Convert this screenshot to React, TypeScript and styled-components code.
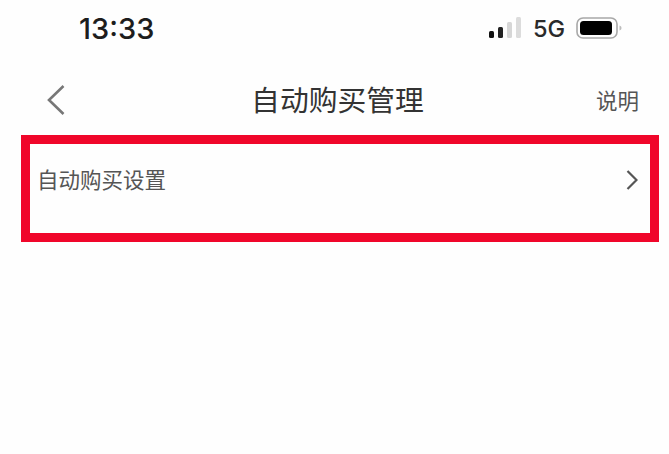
import React from 'react';
import styled, { createGlobalStyle } from 'styled-components';

const GlobalStyle = createGlobalStyle`
  html, body {
    margin: 0;
    padding: 0;
    background: #fefefe;
  }
  * {
    box-sizing: border-box;
  }
`;

const Page = styled.div`
  width: 669px;
  height: 454px;
  overflow: hidden;
  background: #fefefe;
  font-family: "Noto Sans CJK SC", "Liberation Sans", sans-serif;
`;

const StatusBar = styled.div`
  height: 58px;
  padding: 0 47px 2px 79px;
  display: flex;
  align-items: center;
  justify-content: space-between;
`;

const Time = styled.span`
  font-family: Inter, "Liberation Sans", sans-serif;
  font-size: 29px;
  font-weight: 500;
  color: #1d1d1d;
`;

const StatusRight = styled.div`
  display: flex;
  align-items: center;
  gap: 11px;
`;

const Network = styled.span`
  font-family: Inter, "Liberation Sans", sans-serif;
  font-size: 23.5px;
  font-weight: 500;
  color: #2a2a2a;
`;

const NavBar = styled.div`
  height: 77px;
  padding: 6px 30px 0 46px;
  display: grid;
  grid-template-columns: 1fr auto 1fr;
  align-items: center;
`;

const BackButton = styled.button`
  width: 20px;
  height: 32px;
  padding: 0;
  border: none;
  background: none;
  display: flex;
`;

const Title = styled.h1`
  margin: 0 10px 0 0;
  font-size: 28.8px;
  font-weight: 400;
  color: #333;
  line-height: 1;
`;

const NavAction = styled.span`
  justify-self: end;
  font-size: 21.5px;
  color: #555;
`;

const HighlightBox = styled.div`
  margin: 0 10px 0 21px;
  height: 107px;
  border: 9px solid #f0062a;
  padding: 0 12px 20px 7px;
  display: flex;
  align-items: center;
  justify-content: space-between;
`;

const RowLabel = styled.span`
  font-size: 21.5px;
  color: #555;
`;

const ForwardSlot = styled.span`
  display: flex;
  margin-top: 3px;
`;

const SignalIcon = () => (
  <svg width="33" height="22" viewBox="0 0 33 22">
    <rect x="0" y="14" width="5" height="7" rx="1.5" fill="#111" />
    <rect x="9" y="10" width="5" height="11" rx="1.5" fill="#222" />
    <rect x="18" y="5" width="5" height="16" rx="1.5" fill="#d6d6d6" />
    <rect x="27" y="0" width="5" height="21" rx="1.5" fill="#dcdcdc" />
  </svg>
);

const BatteryIcon = () => (
  <svg width="46" height="24" viewBox="0 0 46 24">
    <rect x="1" y="2" width="40" height="20" rx="6" fill="none" stroke="#a8a8a8" strokeWidth="1.6" />
    <rect x="4" y="5" width="32" height="14" rx="3.5" fill="#000" />
    <path d="M43.5 9.5c1.5.5 2 1.5 2 2.5s-.5 2-2 2.5z" fill="#bdbdbd" />
  </svg>
);

const BackIcon = () => (
  <svg width="20" height="32" viewBox="0 0 20 32">
    <path d="M17.5 2 3 16l14.5 14" fill="none" stroke="#777" strokeWidth="2.6" />
  </svg>
);

const ForwardIcon = () => (
  <svg width="12" height="20" viewBox="0 0 12 20">
    <path d="M1.5 1 10.5 10l-9 9" fill="none" stroke="#555" strokeWidth="2.2" />
  </svg>
);

const App: React.FC = () => {
  return (
    <Page>
      <GlobalStyle />
      <StatusBar>
        <Time>13:33</Time>
        <StatusRight>
          <SignalIcon />
          <Network>5G</Network>
          <BatteryIcon />
        </StatusRight>
      </StatusBar>
      <NavBar>
        <BackButton><BackIcon /></BackButton>
        <Title>自动购买管理</Title>
        <NavAction>说明</NavAction>
      </NavBar>
      <HighlightBox>
        <RowLabel>自动购买设置</RowLabel>
        <ForwardSlot><ForwardIcon /></ForwardSlot>
      </HighlightBox>
    </Page>
  );
};

export default App;
